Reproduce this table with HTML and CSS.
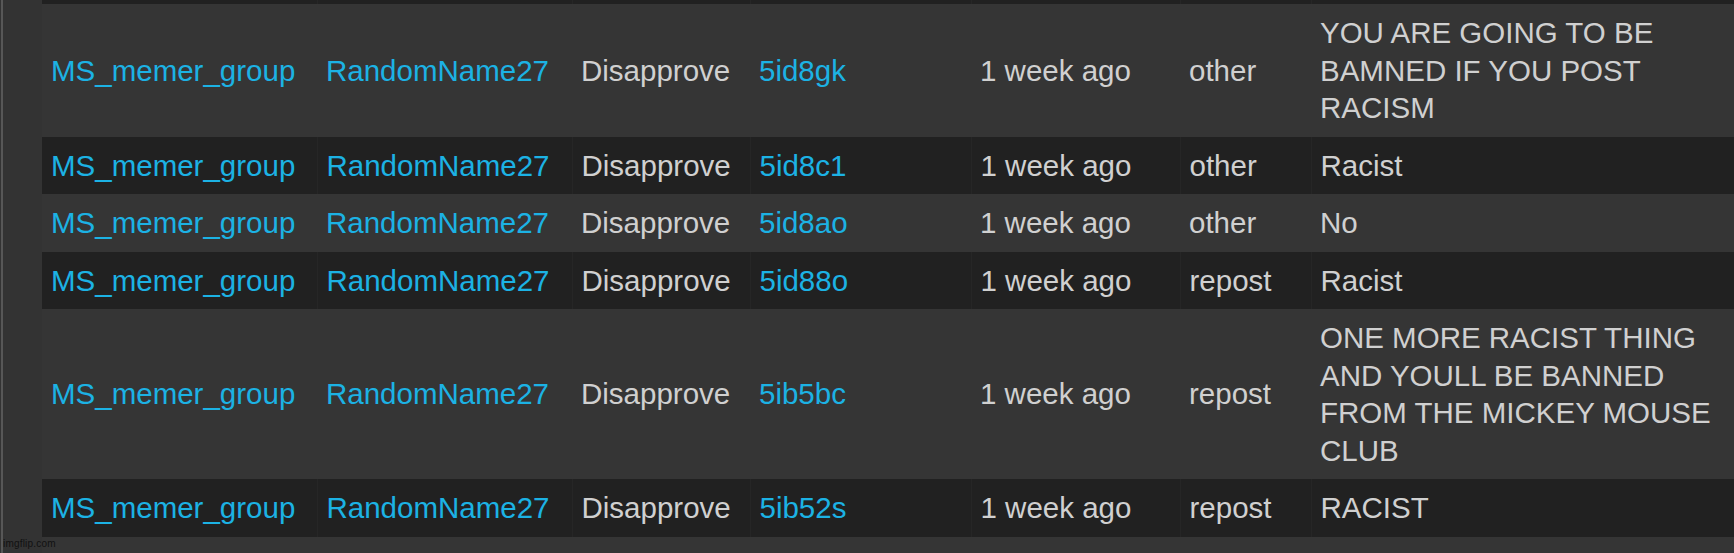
FILE: index.html
```html
<!DOCTYPE html>
<html lang="en">
<head>
    <meta charset="UTF-8">
    <meta name="viewport" content="width=device-width, initial-scale=1.0">
    <title>Mod Actions</title>
    <link rel="stylesheet" href="styles.css">
</head>
<body>
    <div class="page">
        <table class="log">
            <colgroup>
                <col class="c-stream">
                <col class="c-user">
                <col class="c-action">
                <col class="c-post">
                <col class="c-time">
                <col class="c-reason">
                <col class="c-note">
            </colgroup>
            <tbody>
                <tr class="dark edge">
                    <td></td><td></td><td></td><td></td><td></td><td></td><td></td>
                </tr>
                <tr>
                    <td><a href="#">MS_memer_group</a></td>
                    <td><a href="#">RandomName27</a></td>
                    <td>Disapprove</td>
                    <td><a href="#">5id8gk</a></td>
                    <td>1 week ago</td>
                    <td>other</td>
                    <td>YOU ARE GOING TO BE BAMNED IF YOU POST RACISM</td>
                </tr>
                <tr class="dark">
                    <td><a href="#">MS_memer_group</a></td>
                    <td><a href="#">RandomName27</a></td>
                    <td>Disapprove</td>
                    <td><a href="#">5id8c1</a></td>
                    <td>1 week ago</td>
                    <td>other</td>
                    <td>Racist</td>
                </tr>
                <tr>
                    <td><a href="#">MS_memer_group</a></td>
                    <td><a href="#">RandomName27</a></td>
                    <td>Disapprove</td>
                    <td><a href="#">5id8ao</a></td>
                    <td>1 week ago</td>
                    <td>other</td>
                    <td>No</td>
                </tr>
                <tr class="dark">
                    <td><a href="#">MS_memer_group</a></td>
                    <td><a href="#">RandomName27</a></td>
                    <td>Disapprove</td>
                    <td><a href="#">5id88o</a></td>
                    <td>1 week ago</td>
                    <td>repost</td>
                    <td>Racist</td>
                </tr>
                <tr>
                    <td><a href="#">MS_memer_group</a></td>
                    <td><a href="#">RandomName27</a></td>
                    <td>Disapprove</td>
                    <td><a href="#">5ib5bc</a></td>
                    <td>1 week ago</td>
                    <td>repost</td>
                    <td>ONE MORE RACIST THING AND YOULL BE BANNED FROM THE MICKEY MOUSE CLUB</td>
                </tr>
                <tr class="dark">
                    <td><a href="#">MS_memer_group</a></td>
                    <td><a href="#">RandomName27</a></td>
                    <td>Disapprove</td>
                    <td><a href="#">5ib52s</a></td>
                    <td>1 week ago</td>
                    <td>repost</td>
                    <td>RACIST</td>
                </tr>
                <tr>
                    <td><a href="#">MS_memer_group</a></td>
                    <td><a href="#">RandomName27</a></td>
                    <td>Disapprove</td>
                    <td><a href="#">5ib4lb</a></td>
                    <td>1 week ago</td>
                    <td>political</td>
                    <td>Politics</td>
                </tr>
            </tbody>
        </table>
    </div>
    <div class="watermark">imgflip.com</div>
</body>
</html>
```

FILE: styles.css
```css
body {
    margin: 0;
    height: 553px;
    overflow: hidden;
    background-color: #333;
    font-family: "Liberation Sans", Arial, sans-serif;
    position: relative;
}
.page {
    margin-left: 1px;
    border-left: 2px solid #575757;
    padding-left: 39px;
    min-height: 553px;
}
.log {
    width: 1692px;
    border-collapse: collapse;
    table-layout: fixed;
    font-size: 29.5px;
    line-height: 37.5px;
    color: #d0d0d0;
}
.c-stream { width: 275px; }
.c-user { width: 255px; }
.c-action { width: 178px; }
.c-post { width: 221px; }
.c-time { width: 209px; }
.c-reason { width: 131px; }
.c-note { width: 423px; }
.log td {
    padding: 10px 9px;
    vertical-align: middle;
    background-color: #353535;
}
.log tr.dark td {
    background-color: #212121;
    border-left: 1px solid #262626;
}
.log tr.dark td:first-child {
    border-left: none;
}
/* sliver of the row above the crop */
.log tr.edge td {
    padding: 0;
    height: 4px;
    line-height: 0;
}
.log a {
    color: #1cb2e4;
    text-decoration: none;
}
.watermark {
    position: absolute;
    left: 3px;
    top: 538px;
    font-size: 10px;
    line-height: 12px;
    color: #111;
    letter-spacing: 0.2px;
}
```
